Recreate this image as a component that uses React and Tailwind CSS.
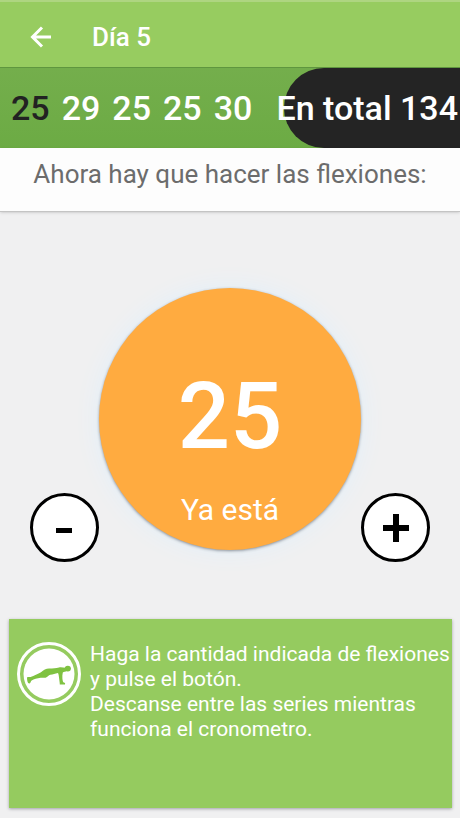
import { useState } from 'react'

const sets = [25, 29, 25, 25, 30]

function BackIcon() {
  return (
    <svg width="22" height="22" viewBox="0 0 22 22" fill="none" stroke="currentColor" strokeWidth="3" aria-hidden="true">
      <path d="M21 11H3M12 1.5L2.5 11L12 20.5" />
    </svg>
  )
}

function PushUpIcon() {
  return (
    <svg className="size-16 shrink-0" viewBox="0 0 64 64" aria-hidden="true">
      <circle cx="32" cy="32" r="30.5" fill="none" stroke="white" strokeWidth="3" />
      <circle cx="32" cy="32" r="25.5" fill="white" />
      <g fill="#7fc241">
        <ellipse cx="50.8" cy="26.6" rx="3.1" ry="2.9" />
        <path d="M10 35.6C11.4 34.6 12.4 35.4 13.6 35C17 33.6 21 31.8 24 30.2C26.5 28.2 29 26.6 32 26.6C36 26.6 39 26 42 25.4C45 25 47 25.8 49 25.6L50 28.8C48.4 30 46.8 30 45.8 30.4C45.4 32.6 45.2 34.4 45.4 36.4C45.6 38.4 45.8 39.6 46.8 40.6C48 40.8 48.4 41.4 48 42.4H42.8C42.8 40.4 42.2 37.6 42 35.4C41.8 33.6 41.6 32.4 41 31C38 31.8 36 32.4 33.4 32.8C31.4 33.4 30.6 35 28.6 35.8C26 36 25 35.6 23.6 35.8C20 36.4 17 37.2 14.6 38.4C13.6 39.2 13.8 41.4 12 41.6C10.4 41 10 38 10 35.6Z" />
      </g>
    </svg>
  )
}

function RoundButton({ label, onClick, children }) {
  return (
    <button
      type="button"
      aria-label={label}
      onClick={onClick}
      className="flex size-[69px] shrink-0 items-center justify-center rounded-full border-[3px] border-black bg-white"
    >
      <svg width="28" height="28" viewBox="0 0 28 28" fill="black" aria-hidden="true">
        {children}
      </svg>
    </button>
  )
}

export default function App() {
  const [count, setCount] = useState(25)
  const [current, setCurrent] = useState(0)
  const total = sets.reduce((sum, n) => sum + n, 0)

  const finishSet = () => {
    const next = (current + 1) % sets.length
    setCurrent(next)
    setCount(sets[next])
  }

  return (
    <div className="flex min-h-screen flex-col bg-[#f0f0f1] font-[Roboto,sans-serif]">
      <header className="flex h-[67px] items-center gap-10 border-t-2 border-[#aed581] bg-[#97cc60] px-[30px] pt-1 text-white">
        <button type="button" aria-label="Atrás">
          <BackIcon />
        </button>
        <h1 className="text-[26px] leading-8 font-medium">Día 5</h1>
      </header>

      <section className="flex h-[81px] items-center justify-between border-t border-[#5f963f] bg-linear-to-b from-[#74ae4c] to-[#6cab44] pl-[11px] text-[34px] font-medium text-white">
        <ol className="flex gap-3">
          {sets.map((n, i) => (
            <li key={i} className={i === current ? 'text-[#222222]' : ''}>{n}</li>
          ))}
        </ol>
        <div className="flex h-full w-44 items-center justify-end rounded-l-full bg-[#242424] pr-0.5 whitespace-nowrap">
          En total {total}
        </div>
      </section>

      <section className="flex h-16 justify-center border-b border-[#c4c4c4] bg-[#fdfdfd] pt-2 shadow-sm">
        <h2 className="text-[26px] leading-9 whitespace-nowrap text-[#6c6c6c]">Ahora hay que hacer las flexiones:</h2>
      </section>

      <main className="flex grow items-end justify-between px-[30px] pt-[76px] pb-[57px]">
        <RoundButton label="Menos" onClick={() => setCount(Math.max(0, count - 1))}>
          <path d="M5 14h16v5H5z" />
        </RoundButton>
        <button
          type="button"
          onClick={finishSet}
          className="mb-3 flex size-[262px] shrink-0 flex-col items-center justify-end rounded-full bg-[#ffab40] pb-5 text-white shadow-[0_1px_3px_#8a9099,0_0_24px_#e0effa]"
        >
          <span className="text-[92px] leading-[110px] font-medium">{count}</span>
          <span className="mt-[18px] text-[30px] leading-10">Ya está</span>
        </button>
        <RoundButton label="Más" onClick={() => setCount(count + 1)}>
          <path d="M11 0h6v11h10v6H17v11h-6V17H1v-6h10z" />
        </RoundButton>
      </main>

      <section className="mr-2 mb-[10px] ml-[9px] flex min-h-[189px] gap-[9px] bg-[#95cb5f] pt-[23px] pl-2 text-white shadow-[0_1px_3px_#a0a0a8]">
        <PushUpIcon />
        <p className="text-[21px] leading-[25px] whitespace-nowrap">
          Haga la cantidad indicada de flexiones<br />
          y pulse el botón.<br />
          Descanse entre las series mientras<br />
          funciona el cronometro.
        </p>
      </section>
    </div>
  )
}
